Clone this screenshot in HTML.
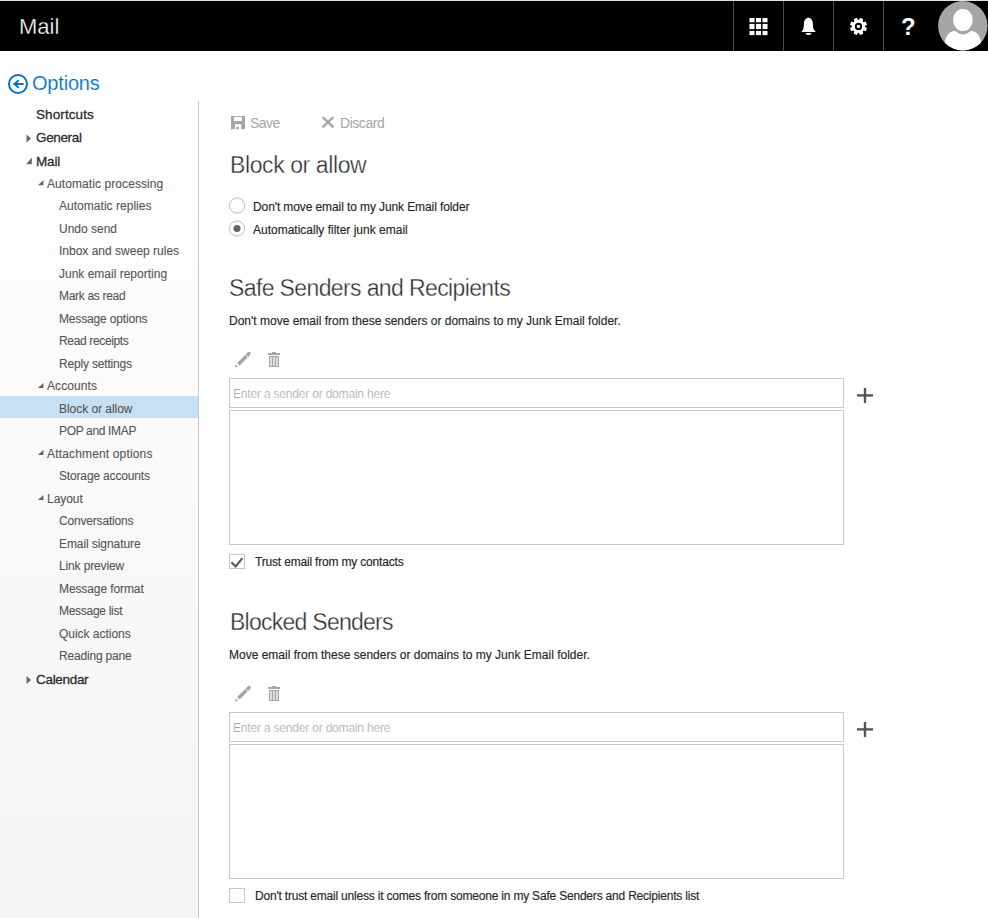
<!DOCTYPE html>
<html><head><meta charset="utf-8">
<style>
html,body{margin:0;padding:0;width:988px;height:918px;overflow:hidden;background:#fff;font-family:"Liberation Sans",sans-serif;}
.a{position:absolute;white-space:nowrap;line-height:1;}
#hdr{position:absolute;left:0;top:0;width:988px;height:51px;background:#000;}
#hdrline{position:absolute;left:0;top:0;width:988px;height:1px;background:#e3e3e3;}
.sep{position:absolute;top:1px;width:1px;height:50px;background:#4c4c4c;}
#nav{position:absolute;left:0;top:51px;width:198px;height:867px;background:linear-gradient(#fff,#f4f4f4);}
#navline{position:absolute;left:198px;top:101px;width:1px;height:817px;background:#c8c8c8;}
#sel{position:absolute;left:0;top:396px;width:198px;height:22px;background:#c7e0f4;}
.t1{font-size:13.5px;color:#2b2b2b;-webkit-text-stroke:0.28px #2b2b2b;}
.t2{font-size:12px;color:#555;-webkit-text-stroke:0.1px #555;}
.body{font-size:12px;color:#262626;-webkit-text-stroke:0.15px #262626;}
.h{font-size:23px;color:#2b2b2b;-webkit-text-stroke:0.35px #fff;}
.box{position:absolute;border:1px solid #c8c8c8;box-sizing:border-box;background:#fff;}
</style></head><body>
<div id="hdr"></div><div id="hdrline"></div>
<div class="a" style="left:19px;top:16px;font-size:22px;color:#fff;-webkit-text-stroke:0.3px #000;">Mail</div>
<div class="sep" style="left:733px"></div>
<div class="sep" style="left:783px"></div>
<div class="sep" style="left:833px"></div>
<div class="sep" style="left:883px"></div>

<div id="nav"></div><div id="navline"></div><div id="sel"></div>

<div class="a" style="left:32px;top:73px;font-size:20px;color:#0072c6;letter-spacing:-0.2px;-webkit-text-stroke:0.15px #fff;">Options</div>

<div class="a t1" style="left:36px;top:108px;letter-spacing:0.09px;">Shortcuts</div>
<div class="a t1" style="left:36px;top:131px;letter-spacing:-0.35px;">General</div>
<div class="a t1" style="left:36px;top:155px;letter-spacing:-0.17px;">Mail</div>
<div class="a t2" style="left:47px;top:178px;letter-spacing:0.08px;">Automatic processing</div>
<div class="a t2" style="left:59px;top:200px;letter-spacing:0.03px;">Automatic replies</div>
<div class="a t2" style="left:59px;top:223px;">Undo send</div>
<div class="a t2" style="left:59px;top:245px;">Inbox and sweep rules</div>
<div class="a t2" style="left:59px;top:268px;">Junk email reporting</div>
<div class="a t2" style="left:59px;top:290px;letter-spacing:-0.31px;">Mark as read</div>
<div class="a t2" style="left:59px;top:313px;letter-spacing:-0.15px;">Message options</div>
<div class="a t2" style="left:59px;top:335px;letter-spacing:-0.35px;">Read receipts</div>
<div class="a t2" style="left:59px;top:358px;letter-spacing:-0.18px;">Reply settings</div>
<div class="a t2" style="left:47px;top:380px;letter-spacing:0.09px;">Accounts</div>
<div class="a t2" style="left:59px;top:403px;letter-spacing:-0.04px;">Block or allow</div>
<div class="a t2" style="left:59px;top:425px;letter-spacing:-0.34px;">POP and IMAP</div>
<div class="a t2" style="left:47px;top:448px;letter-spacing:0.16px;">Attachment options</div>
<div class="a t2" style="left:59px;top:470px;letter-spacing:-0.16px;">Storage accounts</div>
<div class="a t2" style="left:47px;top:493px;letter-spacing:-0.04px;">Layout</div>
<div class="a t2" style="left:59px;top:515px;letter-spacing:-0.18px;">Conversations</div>
<div class="a t2" style="left:59px;top:538px;letter-spacing:-0.08px;">Email signature</div>
<div class="a t2" style="left:59px;top:560px;letter-spacing:-0.14px;">Link preview</div>
<div class="a t2" style="left:59px;top:583px;letter-spacing:-0.1px;">Message format</div>
<div class="a t2" style="left:59px;top:605px;letter-spacing:-0.29px;">Message list</div>
<div class="a t2" style="left:59px;top:628px;letter-spacing:-0.03px;">Quick actions</div>
<div class="a t2" style="left:59px;top:650px;letter-spacing:-0.18px;">Reading pane</div>
<div class="a t1" style="left:36px;top:673px;letter-spacing:-0.31px;">Calendar</div>

<!-- main -->
<div class="a" style="left:250px;top:116px;font-size:14px;color:#a6a6a6;letter-spacing:-0.5px;">Save</div>
<div class="a" style="left:340px;top:116px;font-size:14px;color:#a6a6a6;letter-spacing:-0.45px;">Discard</div>
<div class="a h" style="left:230px;top:154px;letter-spacing:-0.4px;">Block or allow</div>
<div class="a body" style="left:253px;top:201px;letter-spacing:-0.1px;">Don't move email to my Junk Email folder</div>
<div class="a body" style="left:253px;top:224px;">Automatically filter junk email</div>

<div class="a h" style="left:229px;top:277px;letter-spacing:-0.62px;">Safe Senders and Recipients</div>
<div class="a body" style="left:229px;top:315px;">Don't move email from these senders or domains to my Junk Email folder.</div>
<div class="box" style="left:229px;top:378px;width:615px;height:30px;"></div>
<div class="a" style="left:233px;top:388px;font-size:12px;color:#a6a6a6;letter-spacing:-0.19px;-webkit-text-stroke:0.2px #fff;">Enter a sender or domain here</div>
<div class="box" style="left:229px;top:410px;width:615px;height:135px;"></div>
<div class="box" style="left:229px;top:554px;width:16px;height:15px;"></div>
<div class="a body" style="left:255px;top:556px;letter-spacing:-0.18px;">Trust email from my contacts</div>

<div class="a h" style="left:230px;top:611px;letter-spacing:-0.74px;">Blocked Senders</div>
<div class="a body" style="left:229px;top:649px;">Move email from these senders or domains to my Junk Email folder.</div>
<div class="box" style="left:229px;top:712px;width:615px;height:30px;"></div>
<div class="a" style="left:233px;top:722px;font-size:12px;color:#a6a6a6;letter-spacing:-0.19px;-webkit-text-stroke:0.2px #fff;">Enter a sender or domain here</div>
<div class="box" style="left:229px;top:744px;width:615px;height:135px;"></div>
<div class="box" style="left:229px;top:888px;width:16px;height:15px;"></div>
<div class="a body" style="left:255px;top:890px;letter-spacing:-0.2px;">Don't trust email unless it comes from someone in my Safe Senders and Recipients list</div>

<svg style="position:absolute;left:0;top:0" width="988" height="918">
<g fill="#fff">
 <rect x="749.5" y="18" width="5" height="4.3"/><rect x="756" y="18" width="5" height="4.3"/><rect x="762.5" y="18" width="5" height="4.3"/>
 <rect x="749.5" y="23.9" width="5" height="5.2"/><rect x="756" y="23.9" width="5" height="5.2"/><rect x="762.5" y="23.9" width="5" height="5.2"/>
 <rect x="749.5" y="30.9" width="5" height="4.2"/><rect x="756" y="30.9" width="5" height="4.2"/><rect x="762.5" y="30.9" width="5" height="4.2"/>
 <path d="M801.2,32 L815.9,32 C814.5,30.5 813.4,29.5 813.1,27 L812.8,23 C812.6,20 810.5,17.8 808.4,17.8 C806.3,17.8 804.2,20 804,23 L803.7,27 C803.4,29.5 802.6,30.5 801.2,32 Z"/>
 <path d="M805.8,32.9 L811.3,32.9 C811.3,34.2 810,35 808.5,35 C807,35 805.8,34.2 805.8,32.9 Z"/>
 <path fill-rule="evenodd" d="M859.13,19.83 L860.23,17.87 L863.30,19.15 L862.70,21.31 L863.59,22.20 L865.75,21.60 L867.03,24.67 L865.07,25.77 L865.07,27.03 L867.03,28.13 L865.75,31.20 L863.59,30.60 L862.70,31.49 L863.30,33.65 L860.23,34.93 L859.13,32.97 L857.87,32.97 L856.77,34.93 L853.70,33.65 L854.30,31.49 L853.41,30.60 L851.25,31.20 L849.97,28.13 L851.93,27.03 L851.93,25.77 L849.97,24.67 L851.25,21.60 L853.41,22.20 L854.30,21.31 L853.70,19.15 L856.77,17.87 L857.87,19.83 Z M862.1,26.4 A3.6,3.6 0 1 0 854.9,26.4 A3.6,3.6 0 1 0 862.1,26.4 Z"/>
 <circle cx="858.5" cy="26.4" r="1.7"/>
</g>
<defs><clipPath id="av"><circle cx="962.8" cy="25.8" r="24.7"/></clipPath></defs>
<circle cx="962.8" cy="25.8" r="24.7" fill="#a6a6a6"/>
<g clip-path="url(#av)" fill="#fff">
 <ellipse cx="962.9" cy="19.9" rx="9.8" ry="11"/>
 <path d="M943.5,56 C943.5,40 947,31 955,31 C958,33 960,34.4 963,34.4 C966,34.4 968,33 971,31 C979,31 982.5,40 982.5,56 Z"/>
</g>
<g fill="none" stroke="#0072c6" stroke-width="2">
 <circle cx="18" cy="84" r="9"/>
 <line x1="13.6" y1="84" x2="23.6" y2="84"/>
 <polyline points="18.7,80.1 14.6,84 18.7,87.9"/>
</g>
<path fill="#a6a6a6" fill-rule="evenodd" d="M231,116 H245 V129.3 H231 Z M233.8,117 H242 V121 H233.8 Z M234.9,124.2 H241.2 V129.3 H234.9 Z"/>
<rect x="236.2" y="127.1" width="2.6" height="2.2" fill="#a6a6a6"/>
<g stroke="#a6a6a6" stroke-width="2.3">
 <line x1="322.6" y1="117" x2="333.4" y2="127.4"/>
 <line x1="333.4" y1="117" x2="322.6" y2="127.4"/>
</g>
<circle cx="237" cy="205.5" r="7.6" fill="#fff" stroke="#bdbdbd" stroke-width="1"/>
<circle cx="237" cy="228.5" r="7.6" fill="#fff" stroke="#bdbdbd" stroke-width="1"/>
<circle cx="237" cy="228.5" r="3.5" fill="#666"/>

<g fill="#a6a6a6">
 <line x1="238.4" y1="364.2" x2="247.4" y2="355.2" stroke="#a6a6a6" stroke-width="3.6"/>
 <line x1="247.4" y1="355.2" x2="249.0" y2="353.6" stroke="#a6a6a6" stroke-width="3.6" stroke-linecap="round"/>
 <line x1="244.6" y1="354.0" x2="248.6" y2="358.0" stroke="#fff" stroke-width="0.9"/>
 <path d="M235.0,367.6 L235.8,364.6 L238.0,366.8 Z"/>
 <rect x="268" y="353" width="12" height="2"/>
 <rect x="272" y="352" width="4" height="1"/>
 <rect x="269" y="356" width="10" height="11" fill="#dcdcdc"/>
 <rect x="269" y="356" width="10" height="1"/>
 <rect x="269" y="366" width="10" height="1"/>
 <rect x="269" y="356" width="1" height="11"/>
 <rect x="272" y="356" width="1" height="11"/>
 <rect x="275" y="356" width="1" height="11"/>
 <rect x="278" y="356" width="1" height="11"/>
</g>
<g fill="#555">
 <rect x="857" y="394.2" width="16" height="2.4"/>
 <rect x="863.8" y="388" width="2.4" height="15"/>
</g>

<g fill="#a6a6a6">
 <line x1="238.4" y1="698.2" x2="247.4" y2="689.2" stroke="#a6a6a6" stroke-width="3.6"/>
 <line x1="247.4" y1="689.2" x2="249.0" y2="687.6" stroke="#a6a6a6" stroke-width="3.6" stroke-linecap="round"/>
 <line x1="244.6" y1="688.0" x2="248.6" y2="692.0" stroke="#fff" stroke-width="0.9"/>
 <path d="M235.0,701.6 L235.8,698.6 L238.0,700.8 Z"/>
 <rect x="268" y="687" width="12" height="2"/>
 <rect x="272" y="686" width="4" height="1"/>
 <rect x="269" y="690" width="10" height="11" fill="#dcdcdc"/>
 <rect x="269" y="690" width="10" height="1"/>
 <rect x="269" y="700" width="10" height="1"/>
 <rect x="269" y="690" width="1" height="11"/>
 <rect x="272" y="690" width="1" height="11"/>
 <rect x="275" y="690" width="1" height="11"/>
 <rect x="278" y="690" width="1" height="11"/>
</g>
<g fill="#555">
 <rect x="857" y="728.2" width="16" height="2.4"/>
 <rect x="863.8" y="722" width="2.4" height="15"/>
</g>
<polyline points="231.4,562.3 235.6,566.5 242.4,558.2" fill="none" stroke="#555" stroke-width="2"/>
<g fill="#666">
 <path d="M26.5,134.5 L31,138.5 L26.5,142.5 Z"/>
 <path d="M26.5,676 L31,680 L26.5,684 Z"/>
 <path d="M31.8,157.5 V164.3 H26.2 Z"/>
 <path d="M43.5,180.2 V185.3 H37.8 Z"/>
 <path d="M43.5,383 V388.1 H37.8 Z"/>
 <path d="M43.5,450 V455.1 H37.8 Z"/>
 <path d="M43.5,495 V500.1 H37.8 Z"/>
</g>
</svg>
<div class="a" style="left:901px;top:15px;font-size:24px;font-weight:bold;color:#fff;">?</div>

</body></html>
